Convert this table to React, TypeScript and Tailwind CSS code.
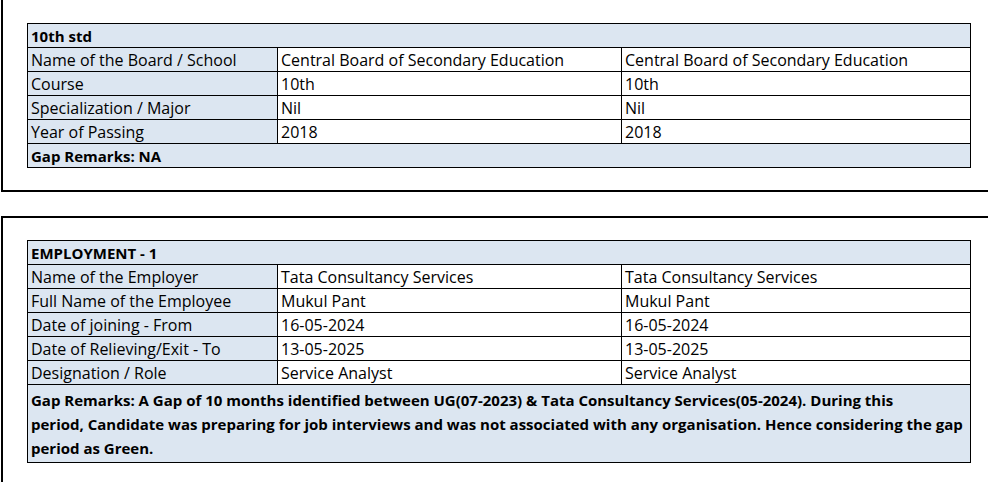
const educationRows = [
  ['Name of the Board / School', 'Central Board of Secondary Education', 'Central Board of Secondary Education'],
  ['Course', '10th', '10th'],
  ['Specialization / Major', 'Nil', 'Nil'],
  ['Year of Passing', '2018', '2018'],
]

const employmentRows = [
  ['Name of the Employer', 'Tata Consultancy Services', 'Tata Consultancy Services'],
  ['Full Name of the Employee', 'Mukul Pant', 'Mukul Pant'],
  ['Date of joining - From', '16-05-2024', '16-05-2024'],
  ['Date of Relieving/Exit - To', '13-05-2025', '13-05-2025'],
  ['Designation / Role', 'Service Analyst', 'Service Analyst'],
]

function CheckTable({
  title,
  rows,
  remarks,
}: {
  readonly title: string
  readonly rows: string[][]
  readonly remarks: string[]
}) {
  return (
    <div className="w-[944px] border border-black text-[16px] leading-[22px] text-black">
      <div className="flex h-[23px] items-center bg-[#dce6f1] px-[3px] text-[15px] font-bold">{title}</div>
      {rows.map(([label, a, b]) => (
        <div key={label} className="grid h-[24px] grid-cols-[250px_344px_1fr] grid-rows-[23px] border-t border-black">
          <div className="flex items-center border-r border-black bg-[#dce6f1] px-[3px] pt-[1px]">{label}</div>
          <div className="flex items-center border-r border-black bg-white px-[3px] pt-[1px]">{a}</div>
          <div className="flex items-center bg-white px-[3px] pt-[1px]">{b}</div>
        </div>
      ))}
      {remarks.length === 1 ? (
        <div className="flex h-[24px] items-center border-t border-black bg-[#dce6f1] px-[3px] text-[15px] font-bold">
          {remarks[0]}
        </div>
      ) : (
        <div className="border-t border-black bg-[#dce6f1] px-[3px] pt-[3px] pb-[2px] text-[15px] font-bold leading-[24px]">
          {remarks.map((line) => (
            <div key={line}>{line}</div>
          ))}
        </div>
      )}
    </div>
  )
}

export default function App() {
  return (
    <div className="h-[482px] w-[988px] overflow-hidden bg-white font-['Open_Sans',sans-serif]">
      <section className="ml-[1px] w-[1000px] border-b-2 border-l-2 border-black pt-[23px] pb-[22px] pl-[24px]">
        <CheckTable title="10th std" rows={educationRows} remarks={['Gap Remarks: NA']} />
      </section>
      <section className="ml-[1px] mt-[24px] w-[1000px] border-t-2 border-l-2 border-black pt-[22px] pb-[40px] pl-[24px]">
        <CheckTable
          title="EMPLOYMENT - 1"
          rows={employmentRows}
          remarks={[
            'Gap Remarks: A Gap of 10 months identified between UG(07-2023) & Tata Consultancy Services(05-2024). During this',
            'period, Candidate was preparing for job interviews and was not associated with any organisation. Hence considering the gap',
            'period as Green.',
          ]}
        />
      </section>
    </div>
  )
}
